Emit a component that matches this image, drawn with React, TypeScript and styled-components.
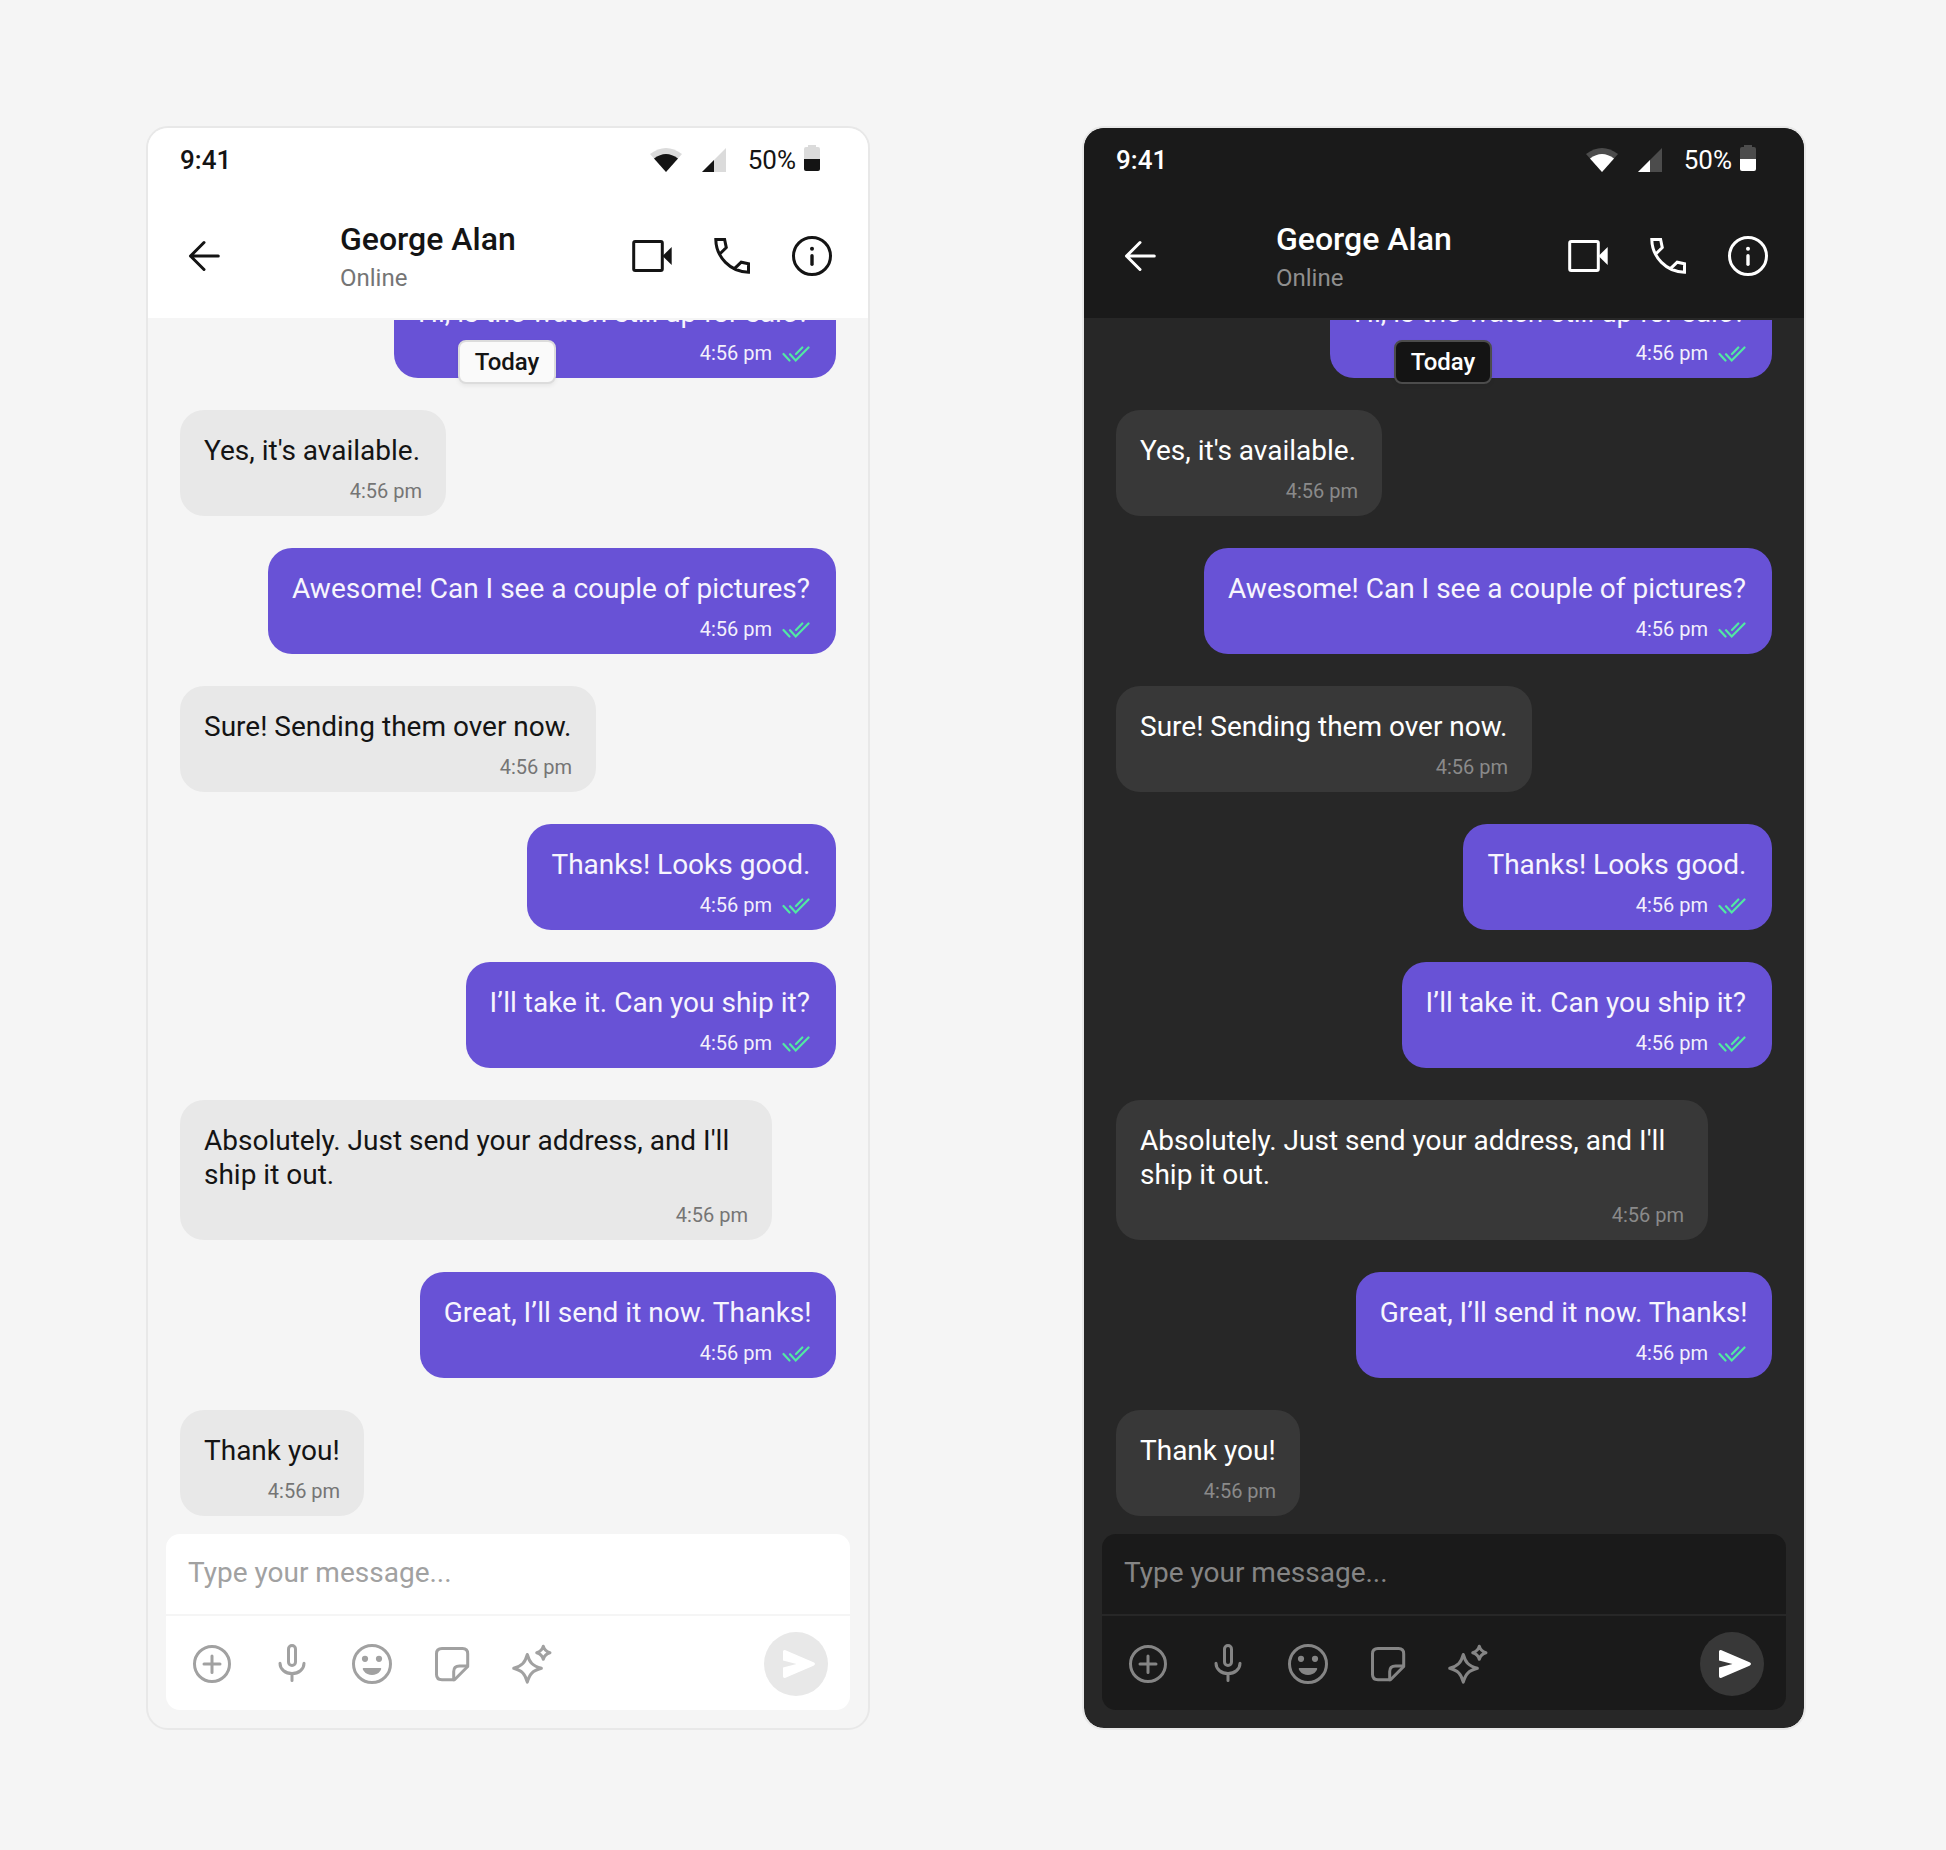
import React from 'react';
import styled, { createGlobalStyle, ThemeProvider } from 'styled-components';

const light = {
  bar: '#ffffff', body: '#f5f5f5', line: '#f5f5f5', text: '#141414', sub: '#757575', faint: '#dbdbdb',
  received: '#e8e8e8', time: '#757575', input: '#ffffff', hint: '#a1a1a1', tool: '#a1a1a1', split: '#f5f5f5',
  chip: '#fafafa', chipLine: '#dcdcdc', send: '#e8e8e8', phoneLine: '#e8e8e8',
};
const dark: typeof light = {
  bar: '#1a1a1a', body: '#272727', line: '#272727', text: '#ffffff', sub: '#8f8f8f', faint: '#4c4c4c',
  received: '#383838', time: '#8a8a8a', input: '#1a1a1a', hint: '#858585', tool: '#858585', split: '#272727',
  chip: '#141414', chipLine: '#4c4c4c', send: '#383838', phoneLine: '#e8e8e8',
};
type Palette = { theme: typeof light };

const Global = createGlobalStyle`
  * { box-sizing: border-box; }
  body { margin: 0; background: #f5f5f5; font-family: Roboto, "Liberation Sans", sans-serif; }
  svg { display: block; flex: none; }
`;

const Page = styled.main`
  display: flex;
  gap: 212px;
  height: 1850px;
  padding: 126px 0 0 146px;
`;

const Phone = styled.section<Palette>`
  display: flex;
  flex-direction: column;
  width: 724px;
  height: 1604px;
  flex: none;
  overflow: hidden;
  border: 2px solid ${p => p.theme.phoneLine};
  border-radius: 22px;
  background: ${p => p.theme.body};
  background-clip: padding-box;
  color: ${p => p.theme.text};
`;

const StatusBar = styled.div<Palette>`
  display: flex;
  align-items: center;
  height: 64px;
  flex: none;
  padding: 0 48px 0 32px;
  background: ${p => p.theme.bar};
  font-size: 26px;
  line-height: 32px;
`;
const Clock = styled.span`
  flex: 1;
  font-weight: 500;
`;
const Battery = styled.span`
  display: flex;
  align-items: center;
  gap: 8px;
  margin-left: 22px;

  svg { margin-bottom: 4px; }
`;

const Header = styled.header<Palette>`
  display: flex;
  align-items: center;
  height: 128px;
  flex: none;
  padding: 2px 32px 0;
  background: ${p => p.theme.bar};
  border-bottom: 2px solid ${p => p.theme.line};
`;
const Contact = styled.div`
  flex: 1;
  padding-left: 112px;
`;
const Name = styled.h1`
  margin: 0;
  font-size: 32px;
  line-height: 42px;
  font-weight: 500;
`;
const Presence = styled.p<Palette>`
  margin: 2px 0 0;
  font-size: 24px;
  line-height: 32px;
  color: ${p => p.theme.sub};
`;
const Actions = styled.div`
  display: flex;
  gap: 32px;
`;

const Conversation = styled.div`
  position: relative;
  display: flex;
  flex: 1;
  flex-direction: column;
  justify-content: flex-end;
  gap: 32px;
  padding: 0 32px;
  overflow: hidden;
`;
const DayChip = styled.span<Palette>`
  position: absolute;
  top: 20px;
  left: 310px;
  width: 98px;
  height: 44px;
  border: 2px solid ${p => p.theme.chipLine};
  border-radius: 8px;
  background: ${p => p.theme.chip};
  box-shadow: 0 2px 4px rgba(0, 0, 0, 0.06);
  font-size: 24px;
  line-height: 40px;
  font-weight: 500;
  text-align: center;
`;
const Bubble = styled.article<Palette & { $sent: boolean }>`
  display: flex;
  flex-direction: column;
  flex: none;
  align-self: ${p => (p.$sent ? 'flex-end' : 'flex-start')};
  max-width: 592px;
  padding: 24px 24px 13px;
  border-radius: 24px;
  background: ${p => (p.$sent ? '#6852d6' : p.theme.received)};
  color: ${p => (p.$sent ? '#f7f5fd' : p.theme.text)};
`;
const Message = styled.p<{ $slack: number }>`
  margin: 0;
  padding-right: ${p => p.$slack}px;
  font-size: 28px;
  line-height: 34px;
`;
const Meta = styled.div<Palette & { $sent: boolean }>`
  display: flex;
  align-items: center;
  align-self: flex-end;
  gap: 10px;
  height: 24px;
  margin-top: 11px;
  font-size: 20px;
  line-height: 24px;
  color: ${p => (p.$sent ? '#f3f0fc' : p.theme.time)};

  svg { margin-top: 2px; }
`;

const Composer = styled.div<Palette>`
  flex: none;
  height: 176px;
  margin: 18px;
  border-radius: 14px;
  background: ${p => p.theme.input};
`;
const Draft = styled.div<Palette>`
  height: 82px;
  padding: 22px 22px 0;
  border-bottom: 2px solid ${p => p.theme.split};
  color: ${p => p.theme.hint};
  font-size: 28px;
  line-height: 34px;
`;
const Tools = styled.div<Palette>`
  display: flex;
  align-items: center;
  gap: 32px;
  height: 94px;
  padding: 2px 22px 0;
  color: ${p => p.theme.tool};
`;
const Send = styled.div<Palette>`
  display: flex;
  width: 64px;
  height: 64px;
  margin-left: auto;
  border-radius: 50%;
  background: ${p => p.theme.send};
  color: #ffffff;
`;

function Icon({ children, size = 48 }: { children: React.ReactNode; size?: number }) {
  return (
    <svg width={size} height={size} viewBox={`0 0 ${size} ${size}`} fill="none" stroke="currentColor"
      strokeWidth="3" strokeLinecap="round" strokeLinejoin="round">{children}</svg>
  );
}

const Back = () => <Icon><path d="M38.300 24H10.500M24 10.500L10.500 24L24 37.500" /></Icon>;
const Video = () => (
  <Icon>
    <rect x="5.700" y="9.500" width="28.600" height="29" rx="1.500" />
    <path d="M34.500 24L43.700 15V33Z" fill="currentColor" stroke="none" />
  </Icon>
);
const Call = () => (
  <Icon>
    <path strokeLinejoin="miter" d="M12.500 21.300L18.300 15.600L16.600 7.500H7.800C8 25 22.500 40 40.500 40.200V31.800L33.200 30.200L27 36.200" />
  </Icon>
);
const Info = () => (
  <Icon>
    <circle cx="24" cy="24" r="18.500" />
    <path d="M24 23.700V32.300" strokeWidth="3.400" />
    <circle cx="24" cy="16.700" r="2" fill="currentColor" stroke="none" />
  </Icon>
);
const Add = () => <Icon><circle cx="24" cy="24" r="17.500" /><path d="M24 16V32.500M16 24H32" /></Icon>;
const Mic = () => (
  <Icon>
    <rect x="20.500" y="5.500" width="7" height="20" rx="3.500" />
    <path d="M12 23.300C12 29.500 17.500 33.600 24 33.600S36 29.500 36 23.300M24 34V40.500" />
  </Icon>
);
const Smile = () => (
  <Icon>
    <circle cx="24" cy="24" r="18.500" />
    <g fill="currentColor" stroke="none">
      <circle cx="17" cy="18.800" r="3.100" />
      <circle cx="31" cy="18.800" r="3.100" />
      <path d="M15.500 28H32.500C33.700 28 33.400 29.800 32 31.200C28.500 36.200 19.500 36.200 16 31.200C14.600 29.800 14.300 28 15.500 28Z" />
    </g>
  </Icon>
);
const Sticker = () => (
  <Icon>
    <path d="M14 8.500H34.500Q39.700 8.500 39.700 13.700V26.500L26.500 39.700H14Q8.500 39.700 8.500 34.500V13.700Q8.500 8.500 14 8.500Z" />
    <path d="M25.700 39.700V31.500Q25.700 25.900 31.500 25.900H39.500" />
  </Icon>
);
const Sparkle = () => (
  <Icon>
    <path d="M19.300 14.500C21.500 22.500 24.500 26 33.400 28.300C24.500 30.700 21.500 34 19.300 42.200C17.100 34 14.100 30.700 5.700 28.300C14.100 26 17.100 22.500 19.300 14.500Z" />
    <path d="M35.300 6.200C36.300 10 38 11.700 42 12.700C38 13.700 36.300 15.400 35.300 19.300C34.300 15.400 32.600 13.700 28.700 12.700C32.600 11.700 34.300 10 35.300 6.200Z" />
  </Icon>
);
const Plane = () => (
  <Icon size={64}>
    <path d="M19 20C19 18.500 20 17.700 21.500 18.300L49.500 30.300C51.500 31.200 51.500 32.800 49.500 33.700L21.500 45.700C20 46.300 19 45.500 19 44V35.400L32.500 32L19 28.600Z" fill="currentColor" stroke="none" />
  </Icon>
);
const Ticks = () => (
  <svg width="30" height="16" viewBox="0 0 30 16" fill="none" stroke="#52e8a3" strokeWidth="2.200" strokeLinecap="round">
    <path d="M1.500 8L7.500 14.500M8 8.200L13.700 14.400L26.500 1.500M14 8L20.300 1.500" />
  </svg>
);

const Wifi = ({ faint }: { faint: string }) => (
  <svg width="32" height="24" viewBox="0 0 32 24">
    <path d="M0 6Q16 -6 32 6L16 24Z" fill={faint} />
    <path d="M4 10.500Q16 1.500 28 10.500L16 24Z" fill="currentColor" />
  </svg>
);
const SignalSlot = styled.span`
  margin-left: 20px;
`;
const Signal = ({ faint }: { faint: string }) => (
  <SignalSlot>
    <svg width="24" height="24" viewBox="0 0 24 24">
      <path d="M24 0V24H0Z" fill={faint} />
      <path d="M12 12V24H0Z" fill="currentColor" />
    </svg>
  </SignalSlot>
);
const BatteryIcon = ({ faint }: { faint: string }) => (
  <svg width="16" height="26" viewBox="0 0 16 26">
    <path d="M4 0H12V2H14Q16 2 16 4V14H0V4Q0 2 2 2H4Z" fill={faint} />
    <path d="M0 14H16V24Q16 26 14 26H2Q0 26 0 24Z" fill="currentColor" />
  </svg>
);

const messages = [
  { sent: true, slack: 2, text: 'Hi, is the watch still up for sale?' },
  { sent: false, slack: 2, text: "Yes, it's available." },
  { sent: true, slack: 2, text: 'Awesome! Can I see a couple of pictures?' },
  { sent: false, slack: 0.5, text: 'Sure! Sending them over now.' },
  { sent: true, slack: 1.5, text: 'Thanks! Looks good.' },
  { sent: true, slack: 2, text: 'I’ll take it. Can you ship it?' },
  { sent: false, slack: 0, text: "Absolutely. Just send your address, and I'll ship it out." },
  { sent: true, slack: 0.5, text: 'Great, I’ll send it now. Thanks!' },
  { sent: false, slack: 0.5, text: 'Thank you!' },
];

function Chat({ palette }: { palette: typeof light }) {
  return (
    <ThemeProvider theme={palette}>
      <Phone>
        <StatusBar>
          <Clock>9:41</Clock>
          <Wifi faint={palette.faint} />
          <Signal faint={palette.faint} />
          <Battery>50%<BatteryIcon faint={palette.faint} /></Battery>
        </StatusBar>
        <Header>
          <Back />
          <Contact>
            <Name>George Alan</Name>
            <Presence>Online</Presence>
          </Contact>
          <Actions><Video /><Call /><Info /></Actions>
        </Header>
        <Conversation>
          {messages.map(m => (
            <Bubble key={m.text} $sent={m.sent}>
              <Message $slack={m.slack}>{m.text}</Message>
              <Meta $sent={m.sent}>4:56 pm{m.sent && <Ticks />}</Meta>
            </Bubble>
          ))}
          <DayChip>Today</DayChip>
        </Conversation>
        <Composer>
          <Draft>Type your message...</Draft>
          <Tools>
            <Add /><Mic /><Smile /><Sticker /><Sparkle />
            <Send><Plane /></Send>
          </Tools>
        </Composer>
      </Phone>
    </ThemeProvider>
  );
}

export default function App() {
  return (
    <>
      <Global />
      <Page>
        <Chat palette={light} />
        <Chat palette={dark} />
      </Page>
    </>
  );
}
